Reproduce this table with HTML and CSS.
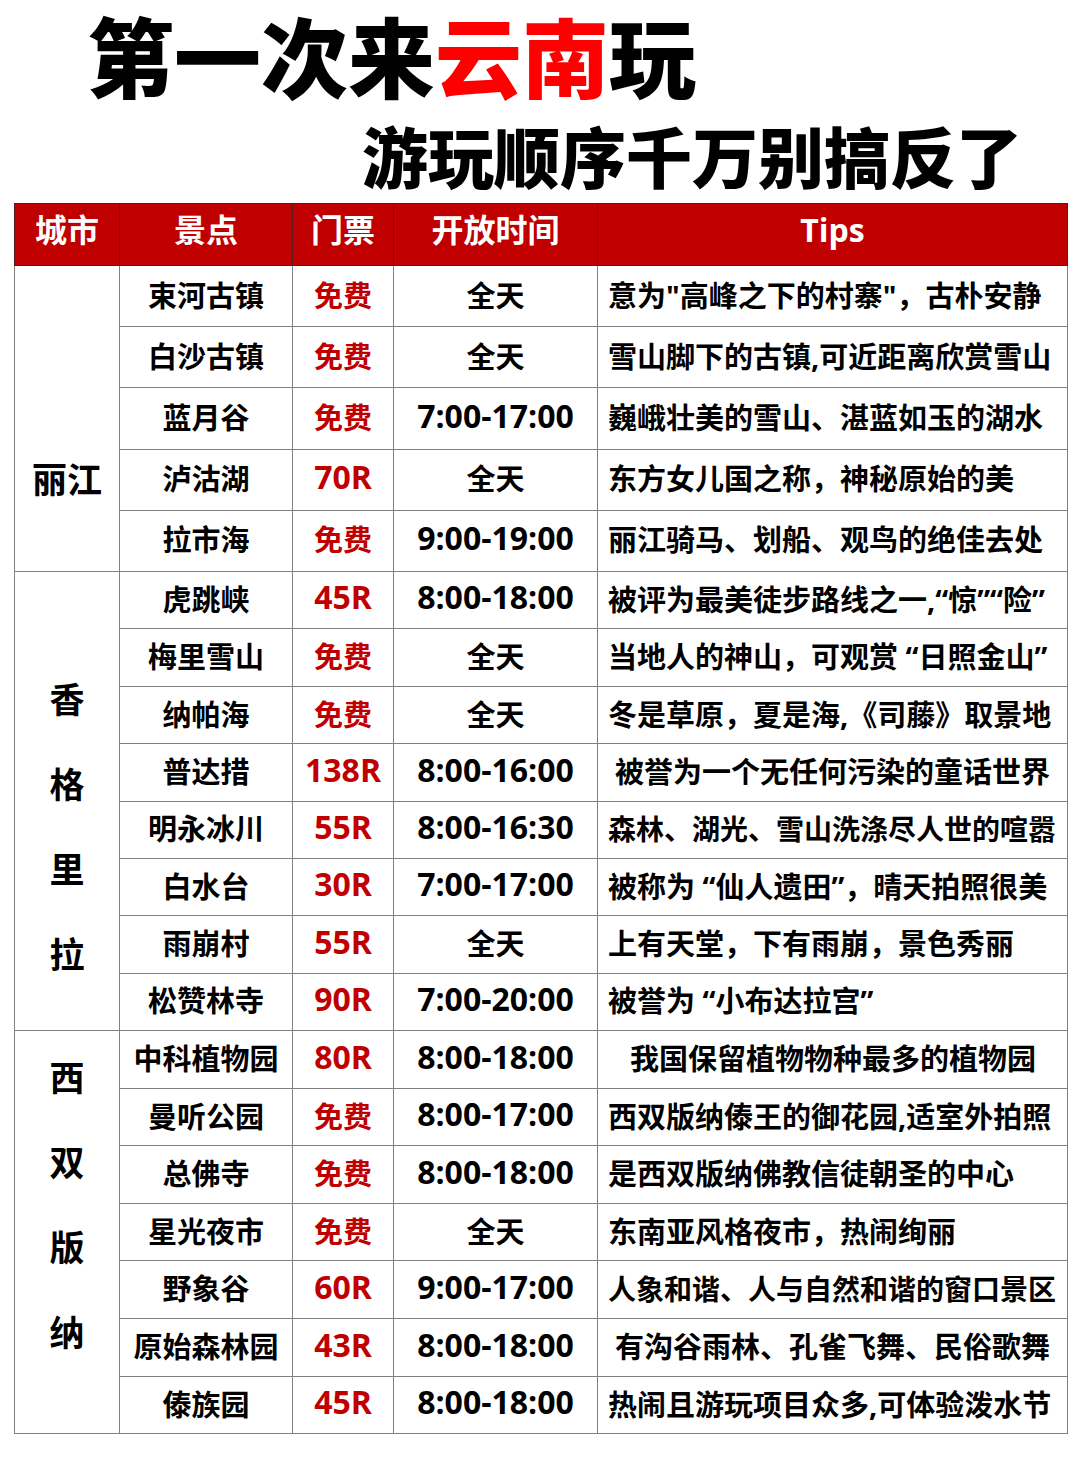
FILE: index.html
```html
<!DOCTYPE html>
<html lang="zh-CN">
<head>
<meta charset="utf-8">
<title>第一次来云南玩</title>
<link rel="stylesheet" href="styles.css">
</head>
<body>
<div class="page">
  <header class="titles">
    <h1 class="t1">第一次来<span class="red">云南</span>玩</h1>
    <h2 class="t2">游玩顺序千万别搞反了</h2>
  </header>
  <table class="tbl">
    <colgroup>
      <col class="c-city"><col class="c-spot"><col class="c-price"><col class="c-time"><col class="c-tips">
    </colgroup>
    <thead>
      <tr class="hd"><th>城市</th><th>景点</th><th>门票</th><th>开放时间</th><th>Tips</th></tr>
    </thead>
    <tbody>
      <tr class="r1"><td class="city city-lj" rowspan="5">丽江</td><td class="spot">束河古镇</td><td class="price">免费</td><td class="time">全天</td><td class="tips">意为"高峰之下的村寨"，古朴安静</td></tr>
      <tr class="r1"><td class="spot">白沙古镇</td><td class="price">免费</td><td class="time">全天</td><td class="tips">雪山脚下的古镇,可近距离欣赏雪山</td></tr>
      <tr class="r1"><td class="spot">蓝月谷</td><td class="price">免费</td><td class="time num">7:00-17:00</td><td class="tips">巍峨壮美的雪山、湛蓝如玉的湖水</td></tr>
      <tr class="r1"><td class="spot">泸沽湖</td><td class="price num">70R</td><td class="time">全天</td><td class="tips">东方女儿国之称，神秘原始的美</td></tr>
      <tr class="r1"><td class="spot">拉市海</td><td class="price">免费</td><td class="time num">9:00-19:00</td><td class="tips">丽江骑马、划船、观鸟的绝佳去处</td></tr>

      <tr class="r2"><td class="city city-v city-xg" rowspan="8"><span>香</span><span>格</span><span>里</span><span>拉</span></td><td class="spot">虎跳峡</td><td class="price num">45R</td><td class="time num">8:00-18:00</td><td class="tips">被评为最美徒步路线之一,“惊”“险”</td></tr>
      <tr class="r2"><td class="spot">梅里雪山</td><td class="price">免费</td><td class="time">全天</td><td class="tips">当地人的神山，可观赏 “日照金山”</td></tr>
      <tr class="r2"><td class="spot">纳帕海</td><td class="price">免费</td><td class="time">全天</td><td class="tips">冬是草原，夏是海,《司藤》取景地</td></tr>
      <tr class="r2"><td class="spot">普达措</td><td class="price num">138R</td><td class="time num">8:00-16:00</td><td class="tips ind1">被誉为一个无任何污染的童话世界</td></tr>
      <tr class="r2"><td class="spot">明永冰川</td><td class="price num">55R</td><td class="time num">8:00-16:30</td><td class="tips long">森林、湖光、雪山洗涤尽人世的喧嚣</td></tr>
      <tr class="r2"><td class="spot">白水台</td><td class="price num">30R</td><td class="time num">7:00-17:00</td><td class="tips">被称为 “仙人遗田”，晴天拍照很美</td></tr>
      <tr class="r2"><td class="spot">雨崩村</td><td class="price num">55R</td><td class="time">全天</td><td class="tips">上有天堂，下有雨崩，景色秀丽</td></tr>
      <tr class="r2"><td class="spot">松赞林寺</td><td class="price num">90R</td><td class="time num">7:00-20:00</td><td class="tips">被誉为 “小布达拉宫”</td></tr>

      <tr class="r3"><td class="city city-v city-xs" rowspan="7"><span>西</span><span>双</span><span>版</span><span>纳</span></td><td class="spot">中科植物园</td><td class="price num">80R</td><td class="time num">8:00-18:00</td><td class="tips ind2">我国保留植物物种最多的植物园</td></tr>
      <tr class="r3"><td class="spot">曼听公园</td><td class="price">免费</td><td class="time num">8:00-17:00</td><td class="tips">西双版纳傣王的御花园,适室外拍照</td></tr>
      <tr class="r3"><td class="spot">总佛寺</td><td class="price">免费</td><td class="time num">8:00-18:00</td><td class="tips">是西双版纳佛教信徒朝圣的中心</td></tr>
      <tr class="r3"><td class="spot">星光夜市</td><td class="price">免费</td><td class="time">全天</td><td class="tips">东南亚风格夜市，热闹绚丽</td></tr>
      <tr class="r3"><td class="spot">野象谷</td><td class="price num">60R</td><td class="time num">9:00-17:00</td><td class="tips long">人象和谐、人与自然和谐的窗口景区</td></tr>
      <tr class="r3"><td class="spot">原始森林园</td><td class="price num">43R</td><td class="time num">8:00-18:00</td><td class="tips ind1">有沟谷雨林、孔雀飞舞、民俗歌舞</td></tr>
      <tr class="r3"><td class="spot">傣族园</td><td class="price num">45R</td><td class="time num">8:00-18:00</td><td class="tips">热闹且游玩项目众多,可体验泼水节</td></tr>
    </tbody>
  </table>
</div>
</body>
</html>
```

FILE: styles.css
```css
* { box-sizing: border-box; }
html, body { margin: 0; padding: 0; background: #ffffff; }
body {
  width: 1080px;
  height: 1466px;
  font-family: "Open Sans", "Noto Sans CJK SC", sans-serif;
  color: #000;
  overflow: hidden;
}
.page { width: 1080px; }

.titles { height: 203px; }
.t1 {
  margin: 0;
  padding: 0 0 0 87px;
  height: 112px;
  line-height: 108px;
  font-family: "Noto Sans CJK SC", sans-serif;
  font-weight: 900;
  font-size: 87px;
  white-space: nowrap;
}
.t1 .red { color: #ff0000; }
.t2 {
  margin: 0;
  padding-left: 362px;
  height: 91px;
  line-height: 84px;
  font-family: "Noto Sans CJK SC", sans-serif;
  font-weight: 900;
  font-size: 66px;
  white-space: nowrap;
}

.tbl {
  margin-left: 14px;
  width: 1053px;
  border-collapse: collapse;
  table-layout: fixed;
}
.c-city { width: 105px; }
.c-spot { width: 173px; }
.c-price { width: 101px; }
.c-time { width: 204px; }
.c-tips { width: 470px; }

.tbl th, .tbl td {
  border: 1.5px solid #808080;
  padding: 0;
  font-weight: 700;
  white-space: nowrap;
  overflow: hidden;
}
.hd { height: 62px; }
.hd th {
  background: #c00000;
  color: #ffffff;
  font-size: 32px;
  text-align: center;
  border-color: #5a1a1a;
  padding-bottom: 8px;
  line-height: 1.2;
}
.r1 { height: 61.2px; }
.r2 { height: 57.4px; }
.r3 { height: 57.6px; }

.tbl td { font-size: 29px; text-align: center; line-height: 1.2; }
.price { color: #c00000; }
.tbl td.num { font-size: 32px; padding-bottom: 5px; }
.tips { text-align: left !important; padding-left: 10px !important; }
.tbl td.tips.long { font-size: 28px; }
.tips.ind1 { padding-left: 17px !important; }
.tips.ind2 { padding-left: 32px !important; }

.tbl td.city { font-size: 35px; }
.city-lj { padding-top: 124px !important; }
.city-v { vertical-align: top; }
.city-v span { display: block; height: 85px; line-height: 85px; }
.city-xg { padding-top: 85px !important; }
.city-xs { padding-top: 4px !important; }
```
